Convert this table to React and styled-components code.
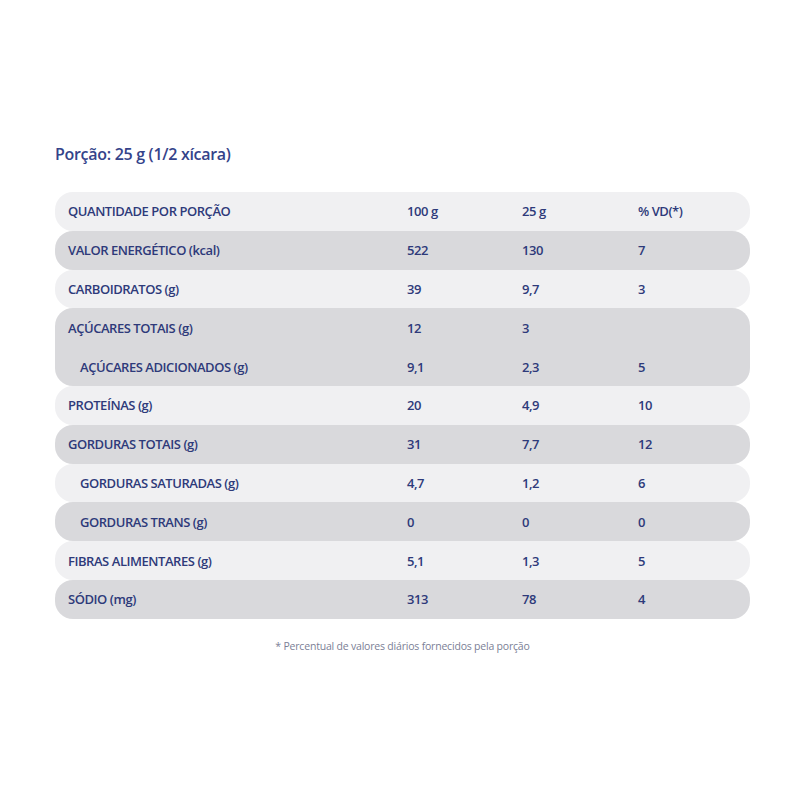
import React from 'react';
import styled, { createGlobalStyle } from "styled-components";

const rows = [
  { label: "VALOR ENERGÉTICO (kcal)", a: "522", b: "130", vd: "7" },
  { label: "CARBOIDRATOS (g)", a: "39", b: "9,7", vd: "3" },
  {
    group: [
      { label: "AÇÚCARES TOTAIS (g)", a: "12", b: "3", vd: "" },
      { label: "AÇÚCARES ADICIONADOS (g)", a: "9,1", b: "2,3", vd: "5", indent: true },
    ],
  },
  { label: "PROTEÍNAS (g)", a: "20", b: "4,9", vd: "10" },
  { label: "GORDURAS TOTAIS (g)", a: "31", b: "7,7", vd: "12" },
  { label: "GORDURAS SATURADAS (g)", a: "4,7", b: "1,2", vd: "6", indent: true },
  { label: "GORDURAS TRANS (g)", a: "0", b: "0", vd: "0", indent: true },
  { label: "FIBRAS ALIMENTARES (g)", a: "5,1", b: "1,3", vd: "5" },
  { label: "SÓDIO (mg)", a: "313", b: "78", vd: "4" },
];

const Line = ({ item }) => (
  <Cells>
    <Label indent={item.indent}>{item.label}</Label>
    <Value>{item.a}</Value>
    <Value>{item.b}</Value>
    <Value>{item.vd}</Value>
  </Cells>
);

const App = () => {
  return (
    <>
      <GlobalStyle />
      <Page>
        <Title>Porção: 25 g (1/2 xícara)</Title>
        <Table>
          <Row>
            <Line item={{ label: "QUANTIDADE POR PORÇÃO", a: "100 g", b: "25 g", vd: "% VD(*)" }} />
          </Row>
          {rows.map((r, i) => (
            <Row key={i} dark={i % 2 === 0}>
              {r.group
                ? r.group.map((g, j) => <Line key={j} item={g} />)
                : <Line item={r} />}
            </Row>
          ))}
        </Table>
        <Note>* Percentual de valores diários fornecidos pela porção</Note>
      </Page>
    </>
  );
};

const GlobalStyle = createGlobalStyle`
  body{
    margin:0;
    background:#ffffff;
    font-family:"Open Sans", "Liberation Sans", sans-serif;
  }
`;

const Page = styled.div`
  width:800px;
  height:800px;
  box-sizing:border-box;
  padding:142px 50px 0 55px;
`;

const Title = styled.h2`
  margin:0 0 26px 0;
  font-size:16px;
  font-weight:600;
  color:#34438a;
  letter-spacing:-0.3px;
  line-height:24px;
`;

const Table = styled.div`
  display:flex;
  flex-direction:column;
`;

const Row = styled.div`
  background:${props => props.dark ? "#d9d9dc" : "#f0f0f2"};
  border-radius:18px;
  padding-left:13px;
`;

const Cells = styled.div`
  display:grid;
  grid-template-columns:339px 115px 116px 1fr;
  align-items:center;
  height:38.8px;
  font-size:13px;
  font-weight:600;
  color:#2e3a7a;
  letter-spacing:-0.45px;
`;

const Label = styled.span`
  padding-left:${props => props.indent ? "12px" : "0"};
`;

const Value = styled.span``;

const Note = styled.p`
  margin:20px 0 0 0;
  text-align:center;
  font-size:10.5px;
  color:#7b8096;
  letter-spacing:-0.2px;
`;

export default App;
